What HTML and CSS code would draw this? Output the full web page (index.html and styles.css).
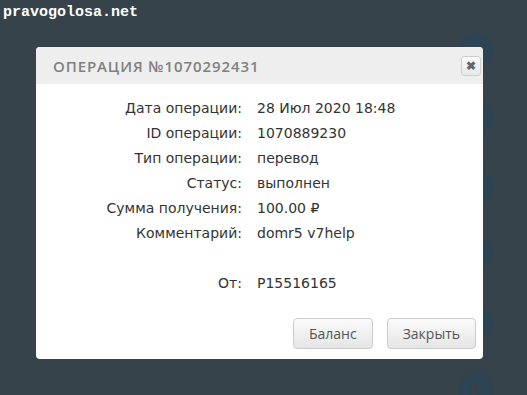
FILE: index.html
```html
<!DOCTYPE html>
<html lang="ru">
<head>
    <meta charset="UTF-8">
    <title>Операция</title>
    <link rel="stylesheet" href="styles.css">
</head>
<body>
    <div class="watermark">pravogolosa.net</div>

    <!-- history list, covered by the dialog -->
    <ul class="history">
        <li><span class="amount"></span><span class="coin"></span></li>
        <li><span class="amount"></span><span class="coin"></span></li>
        <li><span class="amount"></span><span class="coin"></span></li>
        <li><span class="amount"></span><span class="coin"></span></li>
        <li><span class="amount"></span><span class="coin"></span></li>
        <li><span class="amount">+ 10.00 $</span><span class="coin">P</span></li>
    </ul>

    <div class="modal">
        <div class="modal-header">
            <h3>ОПЕРАЦИЯ №1070292431</h3>
            <button class="close" type="button">&#10006;</button>
        </div>
        <div class="modal-body">
            <dl class="details">
                <dt>Дата операции:</dt><dd>28 Июл 2020 18:48</dd>
                <dt>ID операции:</dt><dd>1070889230</dd>
                <dt>Тип операции:</dt><dd>перевод</dd>
                <dt>Статус:</dt><dd>выполнен</dd>
                <dt>Сумма получения:</dt><dd>100.00 &#8381;</dd>
                <dt>Комментарий:</dt><dd>domr5 v7help</dd>
                <dt class="gap">От:</dt><dd class="gap">P15516165</dd>
            </dl>
        </div>
        <div class="modal-footer">
            <button class="btn" type="button">Баланс</button>
            <button class="btn" type="button">Закрыть</button>
        </div>
    </div>
</body>
</html>
```

FILE: styles.css
```css
body {
    margin: 0;
    width: 527px;
    height: 395px;
    overflow: hidden;
    background-color: #36434b;
    font-family: "Open Sans", sans-serif;
    position: relative;
}

.watermark {
    position: absolute;
    top: 4px;
    left: 3px;
    z-index: 5;
    font-family: "Liberation Mono", monospace;
    font-size: 15px;
    font-weight: bold;
    color: #fff;
}

/* background list behind the dialog */
.history {
    list-style: none;
    margin: 0;
    padding: 16px 34px 0 30px;
}

.history li {
    display: flex;
    justify-content: space-between;
    align-items: center;
    height: 68px;
}

.amount {
    color: #2f3a41;
    font-size: 15px;
    padding-top: 20px;
}

.coin {
    width: 34px;
    height: 34px;
    border-radius: 50%;
    background-color: #2c4453;
    color: #36434b;
    font-weight: bold;
    font-size: 20px;
    display: flex;
    align-items: center;
    justify-content: center;
}

/* dialog */
.modal {
    position: absolute;
    top: 47px;
    left: 36px;
    width: 447px;
    height: 312px;
    background-color: #fff;
    border-radius: 4px;
    overflow: hidden;
    display: flex;
    flex-direction: column;
}

.modal-header {
    height: 37px;
    background-color: #eeeeee;
    display: flex;
    align-items: center;
    justify-content: space-between;
    padding: 0 2px 0 17px;
}

.modal-header h3 {
    margin: 0;
    font-family: "Open Sans", sans-serif;
    font-size: 15px;
    font-weight: 600;
    letter-spacing: 0.9px;
    color: #808080;
}

.close {
    width: 20px;
    height: 20px;
    padding: 0;
    border: 1px solid #cfcfcf;
    border-radius: 3px;
    background: linear-gradient(#fafafa, #e8e8e8);
    color: #666;
    font-size: 12px;
    font-weight: bold;
    line-height: 18px;
}

.modal-body {
    flex: 1;
    padding: 12px 0 0;
}

.details {
    display: grid;
    grid-template-columns: 206px 1fr;
    column-gap: 15px;
    margin: 0;
    font-family: "DejaVu Sans", sans-serif;
    font-size: 14px;
    color: #333;
}

.details dt {
    text-align: right;
    line-height: 25px;
}

.details dd {
    margin: 0;
    line-height: 25px;
}

.details .gap {
    margin-top: 25px;
}

.modal-footer {
    display: flex;
    justify-content: flex-end;
    gap: 14px;
    padding: 0 7px 10px 0;
}

.btn {
    height: 31px;
    padding: 0 15px;
    border: 1px solid #cccccc;
    border-radius: 4px;
    background: linear-gradient(#fbfbfb, #e5e5e5);
    font-family: "Open Sans", sans-serif;
    font-size: 14px;
    color: #555;
}
```
